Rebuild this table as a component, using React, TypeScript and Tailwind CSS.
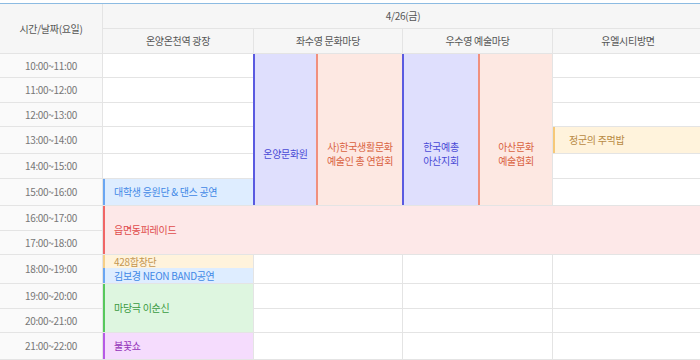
import React from 'react';

const times = [
  '10:00~11:00', '11:00~12:00', '12:00~13:00', '13:00~14:00', '14:00~15:00', '15:00~16:00',
  '16:00~17:00', '17:00~18:00', '18:00~19:00', '19:00~20:00', '20:00~21:00', '21:00~22:00',
];

const rowStart = [
  'row-start-3', 'row-start-4', 'row-start-5', 'row-start-6', 'row-start-7', 'row-start-8',
  'row-start-9', 'row-start-10', 'row-start-11', 'row-start-12', 'row-start-13', 'row-start-14',
];

const Empty = ({ col, row }: { col: string; row: string }) => (
  <div className={`${col} ${row} bg-white`} />
);

const Lines = ({ lines }: { lines: string[] }) => (
  <div className="flex flex-col items-center">
    {lines.map((l) => (
      <div key={l} className="leading-[14px] whitespace-nowrap">{l}</div>
    ))}
  </div>
);

export default function App() {
  return (
    <div className="w-[700px] h-[360px] overflow-hidden bg-white pt-[3px] font-['Noto_Sans_CJK_KR',sans-serif] text-[10px] leading-none tracking-[-0.3px]">
      <div className="w-[703px] border-t border-[#8cbbe2] bg-[#e4e4e4] grid gap-px grid-cols-[102px_150px_148px_149px_150px] grid-rows-[24px_24px_23px_24px_23px_26px_24px_26px_24px_23px_28px_24px_23px_26px] pb-px">
        {/* header */}
        <div className="col-start-1 row-start-1 row-span-2 bg-[#f6f6f6] flex items-center justify-center text-[#555]">
          시간/날짜(요일)
        </div>
        <div className="col-start-2 col-span-4 row-start-1 bg-[#f6f6f6] flex items-center justify-center text-[#555]">
          4/26(금)
        </div>
        {['온양온천역 광장', '좌수영 문화마당', '우수영 예술마당', '유엘시티방면'].map((v, i) => (
          <div
            key={v}
            className={`${['col-start-2', 'col-start-3', 'col-start-4', 'col-start-5'][i]} row-start-2 bg-[#f6f6f6] flex items-center justify-center text-[#555]`}
          >
            {v}
          </div>
        ))}

        {/* time column */}
        {times.map((t, i) => (
          <div key={t} className={`col-start-1 ${rowStart[i]} bg-[#fafafa] flex items-center justify-center text-[#777]`}>
            {t}
          </div>
        ))}

        {/* 온양온천역 광장 */}
        {rowStart.slice(0, 5).map((r) => (
          <Empty key={r} col="col-start-2" row={r} />
        ))}
        <div className="col-start-2 row-start-8 bg-[#deedff] border-l-2 border-[#6aa6f2] flex items-center pl-[9px] text-[#3f88e6]">
          대학생 응원단 &amp; 댄스 공연
        </div>
        <div className="col-start-2 col-span-4 row-start-9 row-span-2 bg-[#fde8e8] border-l-2 border-[#f06666] flex items-center pl-[9px] text-[#e04c4c]">
          읍면동퍼레이드
        </div>
        <div className="col-start-2 row-start-11 flex flex-col">
          <div className="h-[13px] bg-[#fff3dc] border-l-2 border-[#f6cf86] flex items-center pl-[9px] text-[#c39650]">
            428합창단
          </div>
          <div className="flex-1 bg-[#deedff] border-l-2 border-[#6aa6f2] flex items-center pl-[9px] text-[#3f88e6]">
            김보경 NEON BAND공연
          </div>
        </div>
        <div className="col-start-2 row-start-12 row-span-2 bg-[#def6e0] border-l-2 border-[#57c85c] flex items-center pl-[9px] text-[#3a9a42]">
          마당극 이순신
        </div>
        <div className="col-start-2 row-start-14 bg-[#f5dcfd] border-l-2 border-[#b65ae6] flex items-center pl-[9px] text-[#9333b8]">
          불꽃쇼
        </div>

        {/* 좌수영 문화마당 */}
        <div className="col-start-3 row-start-3 row-span-6 flex -ml-px">
          <div className="w-[63px] bg-[#dfdffd] border-l-2 border-[#5a5ae0] flex justify-center items-center pt-[48px] text-[#4a4ad6]">
            온양문화원
          </div>
          <div className="flex-1 bg-[#fde8e2] border-l-2 border-[#f0907e] flex justify-center items-center pt-[48px] text-[#d9623f]">
            <Lines lines={['사)한국생활문화', '예술인 총 연합회']} />
          </div>
        </div>

        {/* 우수영 예술마당 */}
        <div className="col-start-4 row-start-3 row-span-6 flex -ml-px">
          <div className="w-[76px] bg-[#dfdffd] border-l-2 border-[#5a5ae0] flex justify-center items-center pt-[48px] text-[#4a4ad6]">
            <Lines lines={['한국예총', '아산지회']} />
          </div>
          <div className="flex-1 bg-[#fde8e2] border-l-2 border-[#f0907e] flex justify-center items-center pt-[48px] text-[#d9623f]">
            <Lines lines={['아산문화', '예술협회']} />
          </div>
        </div>

        {/* 유엘시티방면 */}
        {[0, 1, 2, 4, 5].map((i) => (
          <Empty key={i} col="col-start-5" row={rowStart[i]} />
        ))}
        <div className="col-start-5 row-start-6 bg-[#fff3dc] border-l-2 border-[#f6c878] flex items-center pl-[14px] text-[#b88a44]">
          정군의 주먹밥
        </div>

        {/* empty evening cells */}
        {['col-start-3', 'col-start-4', 'col-start-5'].map((c) =>
          rowStart.slice(8).map((r) => <Empty key={c + r} col={c} row={r} />)
        )}
      </div>
    </div>
  );
}
